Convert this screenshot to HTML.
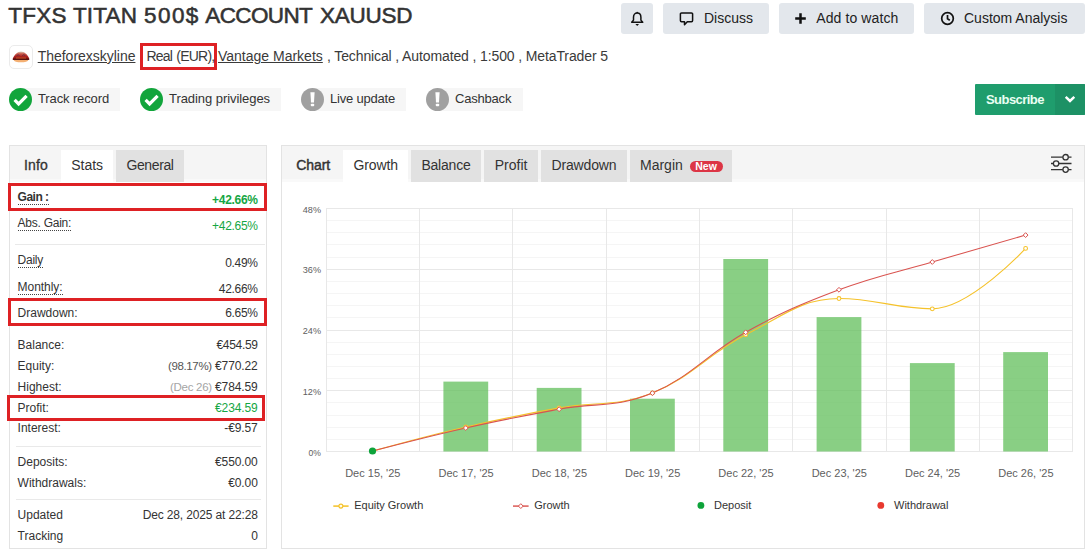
<!DOCTYPE html>
<html lang="en">
<head>
<meta charset="utf-8">
<title>TFXS TITAN 500$ ACCOUNT XAUUSD</title>
<style>
*{box-sizing:border-box;margin:0;padding:0}
html,body{width:1090px;height:553px;overflow:hidden;background:#fff}
body{position:relative;font-family:"Liberation Sans",Arial,sans-serif;color:#333;font-size:14px}
.abs{position:absolute;white-space:nowrap}
a{color:#333;text-decoration:underline}
/* header */
#title{left:8.300px;top:0.900px;width:420px;height:30px;font-size:22.500px;line-height:30px;font-weight:400;color:#333;-webkit-text-stroke:0.55px #333}
#title span{position:absolute;top:0}
#avatar{left:9px;top:45px;width:24px;height:24px;border:1px solid #ebebeb;border-radius:5px;background:#fff}
.meta{top:47px;font-size:14px;line-height:18px;color:#3a3a3a}
#redbox1{left:140px;top:42.800px;width:76.700px;height:27px;border:3px solid #de2124}
.badge{top:88px;height:22.600px;background:#f6f6f6;font-size:13px;line-height:22px;color:#333;padding-left:18px}
.bicon{top:88px;width:23px;height:23px;border-radius:50%}
.btn{top:3px;height:31px;background:#e3e7ec;border-radius:3px;font-size:14px;line-height:31px;color:#222}
#sub{left:975px;top:84px;width:110px;height:31px;background:#1f9d6d;border-radius:1px;overflow:hidden}
#sub b{position:absolute;left:11px;top:0.800px;line-height:30px;font-size:13px;color:#eafff3;letter-spacing:-0.55px}
#sub i{position:absolute;left:80px;top:0;width:30px;height:31px;background:#1d9165}
/* panels */
.panel{border:1px solid #e3e3e3;background:#fff}
.tabbar{left:0;top:0;height:35.500px;background:#f5f5f5;border-bottom:3px solid #f9f9f9}
.tab{top:4px;height:32px;line-height:30px;font-size:14px;text-align:center;color:#333}
.tab.on{background:#fff}
.tab.off{background:#e1e1e1}
/* stats */
.lb,.vl{font-size:12px;line-height:18px;color:#333}
.lb.dot{line-height:14px;padding-top:2px;border-bottom:1px dotted #444}
.vl .mut{color:#a5a5a5;font-size:11.500px;letter-spacing:-0.3px}.vl .mut2{color:#555;font-size:11.500px;letter-spacing:-0.35px}

.g{color:#15a643}
.sep{left:5px;width:250px;height:1px;background:#e9e9e9}
.rb{border:3px solid #de2124}
</style>
</head>
<body>
<!-- HEADER -->
<div class="abs" id="title"><span style="left:0px;letter-spacing:0.24px">TFXS</span> <span style="left:64.600px;letter-spacing:0.17px">TITAN</span> <span style="left:135.600px;letter-spacing:1.48px">500$</span> <span style="left:197px;letter-spacing:-0.62px">ACCOUNT</span> <span style="left:311.600px;letter-spacing:-0.25px">XAUUSD</span></div>
<div class="abs" id="avatar">
<svg width="22" height="22" viewBox="0 0 22 22"><defs><linearGradient id="lg1" x1="0" y1="0" x2="0" y2="1"><stop offset="0" stop-color="#d8ccb8"/><stop offset="0.28" stop-color="#c9584a"/><stop offset="0.6" stop-color="#b02320"/><stop offset="1" stop-color="#7a1010"/></linearGradient></defs><ellipse cx="11" cy="14.300" rx="7.200" ry="1.900" fill="#f2a25a" opacity="0.85"/><path d="M2.400 13.600C4.200 8.600 7.600 5.600 11 5.600C14.400 5.600 17.800 8.600 19.600 13.600Z" fill="url(#lg1)"/><path d="M6.500 10.200l1.600-1.600 1.500 1.500M12.300 10l1.500-1.500 1.600 1.600" stroke="#3a2440" stroke-width="0.900" fill="none" opacity="0.7"/><path d="M3 13.300H19" stroke="#4a0b0b" stroke-width="1.200"/><path d="M6 12h10" stroke="#e8842e" stroke-width="0.700" opacity="0.8"/></svg>
</div>
<a class="abs meta" style="left:37.700px;letter-spacing:-0.02px">Theforexskyline</a>
<div class="abs" id="redbox1"></div>
<div class="abs meta" style="left:146.400px;letter-spacing:-0.8px;word-spacing:1.300px">Real (EUR),</div>
<a class="abs meta" style="left:218px">Vantage Markets</a>
<div class="abs meta" style="left:327px;letter-spacing:-0.12px">, Technical , Automated , 1:500 , MetaTrader 5</div>

<div class="abs badge" style="left:20px;width:100px;letter-spacing:-0.12px">Track record</div>
<div class="abs bicon" style="left:9px;background:#12a53c"><svg width="23" height="23" viewBox="0 0 23 23"><path d="M5.600 11.900l4 4 8-8" fill="none" stroke="#fff" stroke-width="3.200"/></svg></div>
<div class="abs badge" style="left:151px;width:130px;letter-spacing:-0.06px">Trading privileges</div>
<div class="abs bicon" style="left:140px;background:#12a53c"><svg width="23" height="23" viewBox="0 0 23 23"><path d="M5.600 11.900l4 4 8-8" fill="none" stroke="#fff" stroke-width="3.200"/></svg></div>
<div class="abs badge" style="left:312px;width:94px;letter-spacing:-0.2px">Live update</div>
<div class="abs bicon" style="left:301px;background:#a0a0a0"><svg width="23" height="23" viewBox="0 0 23 23"><path d="M9.400 4.200h4.200l-.600 10.200h-3z" fill="#fff"/><rect x="9.800" y="15.700" width="3.400" height="2.600" rx="0.800" fill="#fff"/></svg></div>
<div class="abs badge" style="left:437px;width:85.500px;letter-spacing:-0.2px">Cashback</div>
<div class="abs bicon" style="left:426px;background:#a0a0a0"><svg width="23" height="23" viewBox="0 0 23 23"><path d="M9.400 4.200h4.200l-.600 10.200h-3z" fill="#fff"/><rect x="9.800" y="15.700" width="3.400" height="2.600" rx="0.800" fill="#fff"/></svg></div>

<div class="abs btn" style="left:621px;width:32px">
<svg class="abs" style="left:9px;top:8px" width="15" height="17" viewBox="0 0 15 17"><path d="M1.700 11.300L3.500 9.100V6.300C3.500 3.800 5 2.100 7.200 2.100C9.400 2.100 10.900 3.800 10.900 6.300V9.100L12.700 11.300Z" fill="none" stroke="#111" stroke-width="1.500" stroke-linejoin="round"/><circle cx="7.200" cy="1.500" r="0.800" fill="#111"/><path d="M5.400 12.900h3.600l-1.800 2z" fill="#111"/></svg>
</div>
<div class="abs btn" style="left:663px;width:106px"><svg class="abs" style="left:16px;top:8px" width="16" height="16" viewBox="0 0 16 16"><path d="M2.500 1.900h10a1.100 1.100 0 0 1 1.100 1.100v6.600a1.100 1.100 0 0 1-1.100 1.100H8.300L5.500 13.800V10.700H2.500a1.100 1.100 0 0 1-1.100-1.100V3a1.100 1.100 0 0 1 1.100-1.100z" fill="none" stroke="#111" stroke-width="1.500" stroke-linejoin="round"/></svg><span class="abs" style="left:41px;top:0">Discuss</span></div>
<div class="abs btn" style="left:779px;width:135px"><svg class="abs" style="left:15px;top:9px" width="13" height="13" viewBox="0 0 13 13"><path d="M6.500 1.200v10.600M1.200 6.500h10.600" stroke="#111" stroke-width="2.500"/></svg><span class="abs" style="left:37.300px;top:0;letter-spacing:0.1px">Add to watch</span></div>
<div class="abs btn" style="left:924px;width:161px"><svg class="abs" style="left:15.500px;top:8px" width="15" height="15" viewBox="0 0 15 15"><circle cx="7.500" cy="7.500" r="5.800" fill="none" stroke="#111" stroke-width="1.700"/><path d="M7.500 4v3.800l2.300 1.400" fill="none" stroke="#111" stroke-width="1.700"/></svg><span class="abs" style="left:40px;top:0">Custom Analysis</span></div>

<div class="abs" id="sub"><b>Subscribe</b><i></i><svg class="abs" style="left:89px;top:11px" width="12" height="9" viewBox="0 0 12 9"><path d="M1.700 1.800L6 6l4.300-4.200" fill="none" stroke="#fff" stroke-width="2.500"/></svg></div>

<!-- LEFT PANEL -->
<div class="abs panel" id="lp" style="left:9px;top:145px;width:258px;height:404px">
<div class="abs tabbar" style="width:256px"></div>
<div class="abs tab" style="left:1px;width:50px;-webkit-text-stroke:0.3px #333;letter-spacing:0.2px">Info</div>
<div class="abs tab on" style="left:51px;width:52.300px">Stats</div>
<div class="abs tab off" style="left:106px;width:68px;letter-spacing:-0.4px">General</div>
<div class="abs lb dot" style="left:7.600px;top:42.0px;letter-spacing:-0.5px;font-weight:bold">Gain :</div>
<div class="abs vl g" style="right:8.300px;top:45.0px;letter-spacing:-0.3px;font-weight:bold">+42.66%</div>
<div class="abs lb dot" style="left:7.600px;top:68.0px;letter-spacing:-0.25px">Abs. Gain:</div>
<div class="abs vl g" style="right:8.300px;top:70.5px;letter-spacing:-0.3px">+42.65%</div>
<div class="abs sep" style="top:98px"></div>
<div class="abs lb dot" style="left:7.600px;top:105.2px;letter-spacing:-0.25px">Daily</div>
<div class="abs vl " style="right:8.300px;top:107.7px;letter-spacing:-0.3px">0.49%</div>
<div class="abs lb dot" style="left:7.600px;top:131.8px;letter-spacing:-0.05px">Monthly:</div>
<div class="abs vl " style="right:8.300px;top:133.5px;letter-spacing:-0.3px">42.66%</div>
<div class="abs lb" style="left:7.600px;top:158.3px;letter-spacing:0px">Drawdown:</div>
<div class="abs vl " style="right:8.300px;top:158.3px;letter-spacing:-0.3px">6.65%</div>
<div class="abs lb" style="left:7.600px;top:189.6px;letter-spacing:0px">Balance:</div>
<div class="abs vl " style="right:8.300px;top:189.6px;letter-spacing:-0.3px">€454.59</div>
<div class="abs lb" style="left:7.600px;top:210.9px;letter-spacing:0px">Equity:</div>
<div class="abs vl " style="right:8.300px;top:210.9px;letter-spacing:-0.1px"><span class="mut2">(98.17%)</span> €770.22</div>
<div class="abs lb" style="left:7.600px;top:231.9px;letter-spacing:0px">Highest:</div>
<div class="abs vl " style="right:8.300px;top:231.9px;letter-spacing:-0.1px"><span class="mut">(Dec 26)</span> €784.59</div>
<div class="abs lb" style="left:7.600px;top:252.5px;letter-spacing:0px">Profit:</div>
<div class="abs vl g" style="right:8.300px;top:252.5px;letter-spacing:-0.1px">€234.59</div>
<div class="abs lb" style="left:7.600px;top:273.4px;letter-spacing:0px">Interest:</div>
<div class="abs vl " style="right:8.300px;top:273.4px;letter-spacing:-0.1px">-€9.57</div>
<div class="abs sep" style="top:300px;left:5.500px;width:245.500px"></div>
<div class="abs lb" style="left:7.600px;top:306.9px;letter-spacing:0px">Deposits:</div>
<div class="abs vl " style="right:8.300px;top:306.9px;letter-spacing:-0.1px">€550.00</div>
<div class="abs lb" style="left:7.600px;top:327.9px;letter-spacing:0px">Withdrawals:</div>
<div class="abs vl " style="right:8.300px;top:327.9px;letter-spacing:-0.1px">€0.00</div>
<div class="abs sep" style="top:353px;left:5.500px;width:245.500px"></div>
<div class="abs lb" style="left:7.600px;top:360.2px;letter-spacing:0px">Updated</div>
<div class="abs vl " style="right:8.300px;top:360.2px;letter-spacing:-0.15px">Dec 28, 2025 at 22:28</div>
<div class="abs lb" style="left:7.600px;top:380.7px;letter-spacing:0px">Tracking</div>
<div class="abs vl " style="right:8.300px;top:380.7px;letter-spacing:-0.1px">0</div>
<div class="abs rb" style="left:-2.3px;top:37.3px;width:259.5px;height:27.5px"></div>
<div class="abs rb" style="left:-2.3px;top:152.4px;width:258.9px;height:27.4px"></div>
<div class="abs rb" style="left:-2.7px;top:249.4px;width:257.9px;height:25.2px"></div>
<!--STATS-END-->
</div>

<!-- CHART PANEL -->
<div class="abs panel" id="cp" style="left:281px;top:145px;width:804px;height:404px">
<div class="abs tabbar" style="width:802px"></div>
<div class="abs tab" style="left:14.300px;width:34px;-webkit-text-stroke:0.45px #333;letter-spacing:-0.1px;text-align:left">Chart</div>
<div class="abs tab on" style="left:61.200px;width:65.100px;letter-spacing:-0.15px">Growth</div>
<div class="abs tab off" style="left:129px;width:70px;letter-spacing:-0.2px">Balance</div>
<div class="abs tab off" style="left:202.100px;width:54px">Profit</div>
<div class="abs tab off" style="left:259.200px;width:85.500px;letter-spacing:-0.14px">Drawdown</div>
<div class="abs tab off" style="left:348px;width:102px;text-align:left;padding-left:10px">Margin</div>
<div class="abs" style="left:407.500px;top:14.700px;width:33px;height:11.500px;border-radius:6px;background:#dc3545;color:#fff;font-size:10.500px;line-height:11.500px;font-weight:bold;text-align:center;letter-spacing:0">New</div>
<svg class="abs" style="left:767.300px;top:6px" width="24" height="22" viewBox="0 0 24 22"><g fill="none" stroke="#333" stroke-width="1.300"><path d="M2 5.200h11.800M19.400 5.200H22.500M2 11.500h2.300M9.900 11.500H22.500M2 17.600h11.800M19.400 17.600H22.500"/><circle cx="16.600" cy="5.200" r="2.700"/><circle cx="7.100" cy="11.500" r="2.700"/><circle cx="16.600" cy="17.600" r="2.700"/></g></svg>
<!--CHART-BEGIN-->
<svg class="abs" style="left:0;top:0" width="802" height="402" viewBox="282 146 802 402" font-family="Liberation Sans, Arial, sans-serif">
<path d="M326 220.5H1073M326 232.5H1073M326 244.5H1073M326 257.5H1073M326 281.5H1073M326 293.5H1073M326 305.5H1073M326 317.5H1073M326 342.5H1073M326 354.5H1073M326 366.5H1073M326 378.5H1073M326 402.5H1073M326 415.5H1073M326 427.5H1073M326 439.5H1073" stroke="#f5f5f5" stroke-width="1" fill="none"/>
<path d="M326 208.5H1073M326 269.5H1073M326 330.5H1073M326 390.5H1073M326 451.5H1073M326.5 208.0V452.0M419.5 208.0V452.0M512.5 208.0V452.0M606.5 208.0V452.0M699.5 208.0V452.0M792.5 208.0V452.0M886.5 208.0V452.0M979.5 208.0V452.0M1072.5 208.0V452.0" stroke="#e8e8e8" stroke-width="1" fill="none"/>
<rect x="443.4" y="381.6" width="44.8" height="69.9" fill="#62bf5b" fill-opacity="0.75"/>
<rect x="536.7" y="387.9" width="44.8" height="63.6" fill="#62bf5b" fill-opacity="0.75"/>
<rect x="630.0" y="398.7" width="44.8" height="52.8" fill="#62bf5b" fill-opacity="0.75"/>
<rect x="723.3" y="259.0" width="44.8" height="192.5" fill="#62bf5b" fill-opacity="0.75"/>
<rect x="816.6" y="317.1" width="44.8" height="134.4" fill="#62bf5b" fill-opacity="0.75"/>
<rect x="909.9" y="363.1" width="44.8" height="88.4" fill="#62bf5b" fill-opacity="0.75"/>
<rect x="1003.2" y="352.1" width="44.8" height="99.4" fill="#62bf5b" fill-opacity="0.75"/>
<path d="M372.5 451.1C372.5 451.1 428.5 435.6 465.8 427.0C503.1 418.4 521.8 414.7 559.1 407.9C596.4 401.1 615.1 407.6 652.4 393.0C689.7 378.4 708.4 353.7 745.7 334.8C783.0 315.9 801.7 298.5 839.0 298.5C876.3 298.5 895.0 308.8 932.3 308.8C969.6 308.8 1025.6 248.4 1025.6 248.4" fill="none" stroke="#f5c22b" stroke-width="1.15"/>
<path d="M372.5 451.1C372.5 451.1 428.5 436.4 465.8 428.0C503.1 419.6 521.8 416.2 559.1 409.2C596.4 402.2 615.1 408.5 652.4 393.1C689.7 377.7 708.4 353.0 745.7 332.3C783.0 311.6 801.7 303.9 839.0 289.8C876.3 275.7 895.0 272.9 932.3 262.0C969.6 251.1 1025.6 235.1 1025.6 235.1" fill="none" stroke="#d9534f" stroke-width="1.05"/>
<circle cx="465.8" cy="427.0" r="1.9" fill="#fff" stroke="#f5c22b" stroke-width="1.05"/>
<circle cx="559.1" cy="407.9" r="1.9" fill="#fff" stroke="#f5c22b" stroke-width="1.05"/>
<circle cx="652.4" cy="393.0" r="1.9" fill="#fff" stroke="#f5c22b" stroke-width="1.05"/>
<circle cx="745.7" cy="334.8" r="1.9" fill="#fff" stroke="#f5c22b" stroke-width="1.05"/>
<circle cx="839.0" cy="298.5" r="1.9" fill="#fff" stroke="#f5c22b" stroke-width="1.05"/>
<circle cx="932.3" cy="308.8" r="1.9" fill="#fff" stroke="#f5c22b" stroke-width="1.05"/>
<circle cx="1025.6" cy="248.4" r="1.9" fill="#fff" stroke="#f5c22b" stroke-width="1.05"/>
<path d="M465.8 425.6l2.4 2.4l-2.4 2.4l-2.4-2.4z" fill="#fff" stroke="#d9534f" stroke-width="1"/>
<path d="M559.1 406.8l2.4 2.4l-2.4 2.4l-2.4-2.4z" fill="#fff" stroke="#d9534f" stroke-width="1"/>
<path d="M652.4 390.7l2.4 2.4l-2.4 2.4l-2.4-2.4z" fill="#fff" stroke="#d9534f" stroke-width="1"/>
<path d="M745.7 329.9l2.4 2.4l-2.4 2.4l-2.4-2.4z" fill="#fff" stroke="#d9534f" stroke-width="1"/>
<path d="M839.0 287.4l2.4 2.4l-2.4 2.4l-2.4-2.4z" fill="#fff" stroke="#d9534f" stroke-width="1"/>
<path d="M932.3 259.6l2.4 2.4l-2.4 2.4l-2.4-2.4z" fill="#fff" stroke="#d9534f" stroke-width="1"/>
<path d="M1025.6 232.7l2.4 2.4l-2.4 2.4l-2.4-2.4z" fill="#fff" stroke="#d9534f" stroke-width="1"/>
<circle cx="372.5" cy="451.0" r="3.6" fill="#0da33a"/>
<text x="302.8" y="212.5" font-size="9.7" textLength="18.2" lengthAdjust="spacingAndGlyphs" fill="#606060">48%</text>
<text x="302.8" y="273.2" font-size="9.7" textLength="18.2" lengthAdjust="spacingAndGlyphs" fill="#606060">36%</text>
<text x="302.8" y="334.0" font-size="9.7" textLength="18.2" lengthAdjust="spacingAndGlyphs" fill="#606060">24%</text>
<text x="302.8" y="394.8" font-size="9.7" textLength="18.2" lengthAdjust="spacingAndGlyphs" fill="#606060">12%</text>
<text x="308.6" y="455.5" font-size="9.7" textLength="12.4" lengthAdjust="spacingAndGlyphs" fill="#606060">0%</text>
<text x="372.8" y="477.4" text-anchor="middle" font-size="11" fill="#606060">Dec 15, &#39;25</text>
<text x="466.1" y="477.4" text-anchor="middle" font-size="11" fill="#606060">Dec 17, &#39;25</text>
<text x="559.4" y="477.4" text-anchor="middle" font-size="11" fill="#606060">Dec 18, &#39;25</text>
<text x="652.7" y="477.4" text-anchor="middle" font-size="11" fill="#606060">Dec 19, &#39;25</text>
<text x="746.0" y="477.4" text-anchor="middle" font-size="11" fill="#606060">Dec 22, &#39;25</text>
<text x="839.3" y="477.4" text-anchor="middle" font-size="11" fill="#606060">Dec 23, &#39;25</text>
<text x="932.6" y="477.4" text-anchor="middle" font-size="11" fill="#606060">Dec 24, &#39;25</text>
<text x="1025.9" y="477.4" text-anchor="middle" font-size="11" fill="#606060">Dec 26, &#39;25</text>
<path d="M333.3 506.1h15.3" stroke="#f6c83e" stroke-width="1.7"/><circle cx="340.9" cy="506.1" r="2" fill="#fffbe8" stroke="#f5c22b" stroke-width="1.1"/>
<text x="354.2" y="508.8" font-size="11" fill="#333">Equity Growth</text>
<path d="M513 506.1h15.6" stroke="#de6560" stroke-width="1.6"/><path d="M520.8 503.7l2.4 2.4l-2.4 2.4l-2.4-2.4z" fill="#fff" stroke="#d9534f" stroke-width="1"/>
<text x="534.2" y="508.8" font-size="11" fill="#333">Growth</text>
<circle cx="700.9" cy="505.40000000000003" r="3.4" fill="#0da33a"/><text x="714" y="508.8" font-size="11" fill="#333">Deposit</text>
<circle cx="880.8" cy="505.40000000000003" r="3.4" fill="#e8392f"/><text x="894" y="508.8" font-size="11" fill="#333">Withdrawal</text>
</svg>
<!--CHART-END-->
</div>
</body>
</html>
